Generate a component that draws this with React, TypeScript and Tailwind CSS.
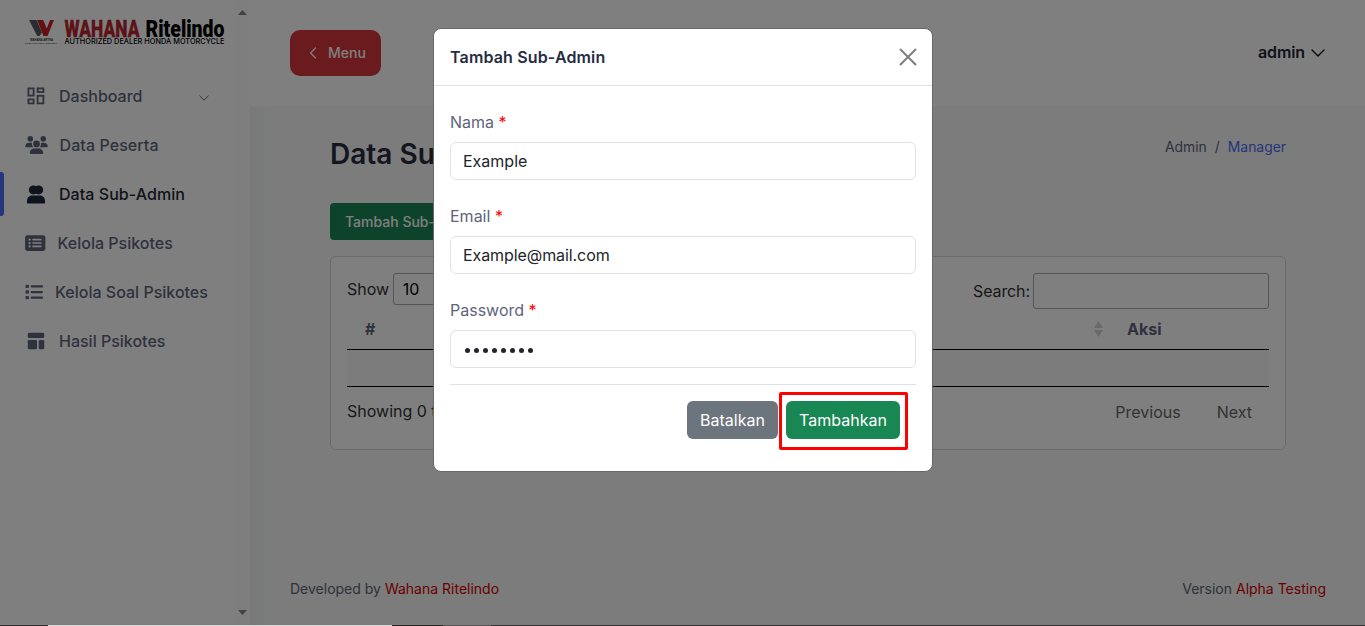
import React from "react";
import { FaUsers, FaRectangleList, FaList } from "react-icons/fa6";

function Logo() {
  return (
    <svg width="204" height="32" viewBox="0 0 204 32" className="block" overflow="visible">
      <path d="M4 2h7.500l5.500 12.500-2.500 3.500h-2.300z" fill="#555b60" />
      <path d="M12 2h6.200l3.600 8.500L25 2h4l-6.500 16h-4z" fill="#c92027" />
      <text x="5" y="23.200" textLength="23" lengthAdjust="spacingAndGlyphs" fontFamily="Liberation Sans" fontWeight="700" fontSize="2.600" fill="#333">WAHANA ARTHA</text>
      <text x="0" y="26" textLength="32" lengthAdjust="spacingAndGlyphs" fontFamily="Liberation Sans" fontWeight="700" fontSize="2.200" fill="#333">PT WAHANAARTHA RITELINDO</text>
      <text x="39.500" y="19" textLength="75" lengthAdjust="spacingAndGlyphs" fontFamily="Roboto" fontWeight="900" fontSize="23.500" fill="#b8272e" stroke="#b8272e" strokeWidth="0.300">WAHANA</text>
      <text x="120.500" y="19" textLength="79" lengthAdjust="spacingAndGlyphs" fontFamily="Roboto" fontWeight="900" fontSize="23.500" fill="#000">Ritelindo</text>
      <text x="39.500" y="26" textLength="160" lengthAdjust="spacingAndGlyphs" fontFamily="Inter" fontWeight="500" fontSize="7.200" fill="#000">AUTHORIZED DEALER HONDA MOTORCYCLE</text>
    </svg>
  );
}

function GridIcon() {
  return (
    <svg width="18" height="18" viewBox="0 0 18 18" fill="none" stroke="currentColor" strokeWidth="1.8">
      <rect x="1.400" y="1.400" width="5.200" height="7.200" />
      <rect x="10.600" y="1.400" width="5.800" height="3.600" />
      <rect x="1.400" y="12.400" width="5.200" height="4" />
      <rect x="10.600" y="8.800" width="5.800" height="7.600" />
    </svg>
  );
}

function TwoUsersIcon() {
  return (
    <svg width="18" height="19" viewBox="0 0 18 19" fill="currentColor">
      <circle cx="6.300" cy="4.900" r="4.500" />
      <circle cx="11.700" cy="4.900" r="4.500" />
      <rect x="6" y="1.200" width="6" height="7.600" />
      <path d="M0 18.500v-2.600C0 12.600 2.400 10.600 5.400 10.600h7.200c3 0 5.400 2 5.400 5.300v2.600z" />
    </svg>
  );
}

function LayoutIcon() {
  return (
    <svg width="18" height="18" viewBox="0 0 18 18" fill="currentColor">
      <rect x="0.800" y="0.700" width="16.400" height="5.400" rx="1.300" />
      <rect x="0.800" y="8" width="9.200" height="9.300" rx="1.300" />
      <rect x="11.800" y="8" width="5.400" height="9.300" rx="1.300" />
    </svg>
  );
}

function Chevron({ className, d = "M1 1l6 6 6-6" }: { className: string; d?: string }) {
  return (
    <svg viewBox="0 0 14 8" className={className} fill="none" stroke="currentColor" strokeWidth="1.3" strokeLinecap="round" strokeLinejoin="round">
      <path d={d} />
    </svg>
  );
}

function Sidebar() {
  const item = "flex h-11 items-center text-base font-medium text-[#5d657b]";
  return (
    <aside className="flex h-full w-[250px] shrink-0 bg-white">
      <div className="flex w-[235px] shrink-0 flex-col">
        <div className="h-[74px] pt-[18px] pl-[25px]"><Logo /></div>
        <nav className="flex flex-col gap-[5px]">
          <a className={item}>
            <span className="ml-[27px] w-8"><GridIcon /></span>
            <span className="grow">Dashboard</span>
            <Chevron className="mt-1 mr-[26px] h-[6px] w-[10px]" />
          </a>
          <a className={item}>
            <span className="ml-[25px] w-[34.500px]"><FaUsers className="h-[18px] w-[23px]" /></span>
            <span className="tracking-[0.08px]">Data Peserta</span>
          </a>
          <a className="flex h-11 items-center text-base font-medium text-[#1f2636]">
            <span className="h-11 w-1 rounded-r-[3px] bg-[#4a6cf7]" />
            <span className="ml-[23px] w-8"><TwoUsersIcon /></span>
            <span className="tracking-[0.05px]">Data Sub-Admin</span>
          </a>
          <a className={item}>
            <span className="ml-[25px] w-8"><FaRectangleList className="h-[18px] w-[20.500px]" /></span>
            <span className="ml-[0.500px]">Kelola Psikotes</span>
          </a>
          <a className={item}>
            <span className="ml-[25px] w-[30px]"><FaList className="h-[18px] w-[18px]" /></span>Kelola Soal Psikotes
          </a>
          <a className={item}>
            <span className="ml-[27px] w-8"><LayoutIcon /></span>Hasil Psikotes
          </a>
        </nav>
      </div>
      <div className="flex w-[15px] flex-col items-center justify-between bg-[#fcfcfc] pt-[10px] pb-[10px] text-[#858585]">
        <svg width="9" height="5" viewBox="0 0 9 5" fill="currentColor"><path d="M0 5l4.500-5L9 5z" /></svg>
        <svg width="9" height="5" viewBox="0 0 9 5" fill="currentColor"><path d="M0 0l4.500 5L9 0z" /></svg>
      </div>
    </aside>
  );
}

function DataCard() {
  return (
    <section className="mt-4 h-[194px] rounded-md border border-[#d5d5d5] bg-white px-4 pt-4 text-base text-[#333]">
      <div className="flex h-9 items-start justify-between">
        <div className="flex items-center">
          Show
          <span className="ml-1 flex h-8 w-[60px] items-center rounded-[3px] border border-[#aaa] pl-[8.500px] text-black">10</span>
        </div>
        <div className="flex items-center">
          <span className="tracking-[-0.1px]">Search:</span>
          <span className="ml-[3px] h-9 w-[236px] rounded-[3px] border border-[#aaa]" />
        </div>
      </div>
      <div className="flex h-[41px] items-center border-b border-black pl-[18px] font-bold text-[#5d657b]">
        <span className="w-[729px]">#</span>
        <svg width="9" height="16" viewBox="0 0 9 16" fill="#d3d3d3"><path d="M0 7l4.500-7L9 7zM0 9l4.500 7L9 9z" /></svg>
        <span className="ml-6">Aksi</span>
      </div>
      <div className="h-[37px] border-b border-black bg-[#f8f8f8]" />
      <div className="flex h-12 items-center justify-between">
        <span>Showing 0 to 0</span>
        <div className="flex gap-9 pt-0.5 pr-[17px] text-[#666]"><span>Previous</span><span>Next</span></div>
      </div>
    </section>
  );
}

function Field({ label, children }: { label: string; children: React.ReactNode }) {
  return (
    <div className="mb-6 flex flex-col gap-2">
      <div className="h-6 text-base leading-6 text-[#5d657b]">{label} <span className="text-[#f00]">*</span></div>
      <div className="flex h-[38px] items-center rounded-md border border-[#dee2e6] px-3 text-base text-[#212529]">{children}</div>
    </div>
  );
}

function Modal() {
  return (
    <div role="dialog" className="absolute top-7 left-[433px] h-[444px] w-[500px] rounded-lg border border-[#686868] bg-white">
      <header className="flex h-[57px] items-center justify-between border-b border-[#dee2e6] pr-[15px] pl-4">
        <h5 className="text-base font-semibold tracking-[0.15px] text-[#262d3f]">Tambah Sub-Admin</h5>
        <svg width="18" height="18" viewBox="0 0 18 18" stroke="#7f7f7f" strokeWidth="2" strokeLinecap="round"><path d="M1.500 1.500l15 15M16.500 1.500l-15 15" /></svg>
      </header>
      <div className="px-4 pt-6">
        <Field label="Nama">Example</Field>
        <Field label="Email"><span className="tracking-[-0.08px]">Example@mail.com</span></Field>
        <Field label="Password">
          <span className="flex gap-[3.500px] pt-[3px] pl-[1.500px]">
            {Array.from({ length: 8 }, (_, i) => <i key={i} className="size-[5.500px] rounded-full bg-[#212529]" />)}
          </span>
        </Field>
        <div className="-mt-2 flex items-start justify-end border-t border-[#dee2e6] pt-[7px] pr-2">
          <button className="mt-[9px] mr-px h-[38px] w-[91px] rounded-md bg-[#6c757d] text-base text-white">Batalkan</button>
          <span className="flex h-[58px] w-[129px] items-center rounded-[2px] border-3 border-[#f00] pl-1">
            <button className="mb-[2px] h-[38px] w-[114px] rounded-md bg-[#198754] text-base text-white">Tambahkan</button>
          </span>
        </div>
      </div>
    </div>
  );
}

export default function App() {
  return (
    <div className="relative flex h-[626px] w-[1365px] flex-col overflow-hidden bg-white font-[Inter,sans-serif]">
      <div className="flex h-[625px]">
        <Sidebar />
        <main className="flex grow flex-col bg-[#f8f8f8]">
          <header className="flex h-[106px] shrink-0 items-center justify-between bg-white pr-10 pl-10">
            <button className="flex h-[46px] w-[91px] items-center rounded-[10px] bg-[#d6343b] pl-[19px] text-[14px] font-medium text-white">
              <svg width="8" height="12" viewBox="0 0 8 12" className="mr-[11px]" fill="none" stroke="currentColor" strokeWidth="1.300" strokeLinecap="round" strokeLinejoin="round"><path d="M6.500 1l-5 5 5 5" /></svg>
              <span className="pb-0.5">Menu</span>
            </button>
            <div className="flex items-center pb-0.5 text-base font-semibold text-[#1f2636]">
              <span className="tracking-[-0.1px]">admin</span><Chevron className="mt-0.5 ml-1.5 h-[8px] w-[14px] text-black" />
            </div>
          </header>
          <div className="flex grow flex-col bg-linear-to-r from-[#f0f2f4] to-[#f8f8f8] to-[24px] pr-[79px] pl-20">
            <div className="flex h-[97px] justify-between">
              <h2 className="pt-[30px] text-[28px] leading-9 font-semibold text-[#262d3f]">Data Sub-Admin</h2>
              <div className="flex gap-2 pt-[31px] text-[13.900px] leading-5 text-[#5d657b]"><span>Admin</span><span>/</span><span className="text-[#4a6cf7]">Manager</span></div>
            </div>
            <button className="h-[37px] w-[162px] shrink-0 rounded-[4px] bg-[#198754] pl-[15px] text-left text-sm font-medium text-white">Tambah Sub-Admin</button>
            <DataCard />
          </div>
          <footer className="flex h-[55px] shrink-0 justify-between bg-linear-to-r from-[#f0f2f4] to-[#f8f8f8] to-[24px] pt-[9px] pr-[39px] pl-10 text-sm leading-5 text-[#5d657b]">
            <span>Developed by <span className="text-[#d50100]">Wahana Ritelindo</span></span>
            <span>Version <span className="text-[#d50100]">Alpha Testing</span></span>
          </footer>
        </main>
      </div>
      <div className="absolute inset-x-0 top-0 h-[625px] bg-black/50" />
      <div className="flex h-px shrink-0 bg-[#363032]">
        <span className="ml-12 w-[344px] bg-[#d8d8d8]" />
        <span className="w-[51px] bg-[#2b2526]" />
        <span className="w-12 bg-[#5a5556]" />
      </div>
      <Modal />
    </div>
  );
}
